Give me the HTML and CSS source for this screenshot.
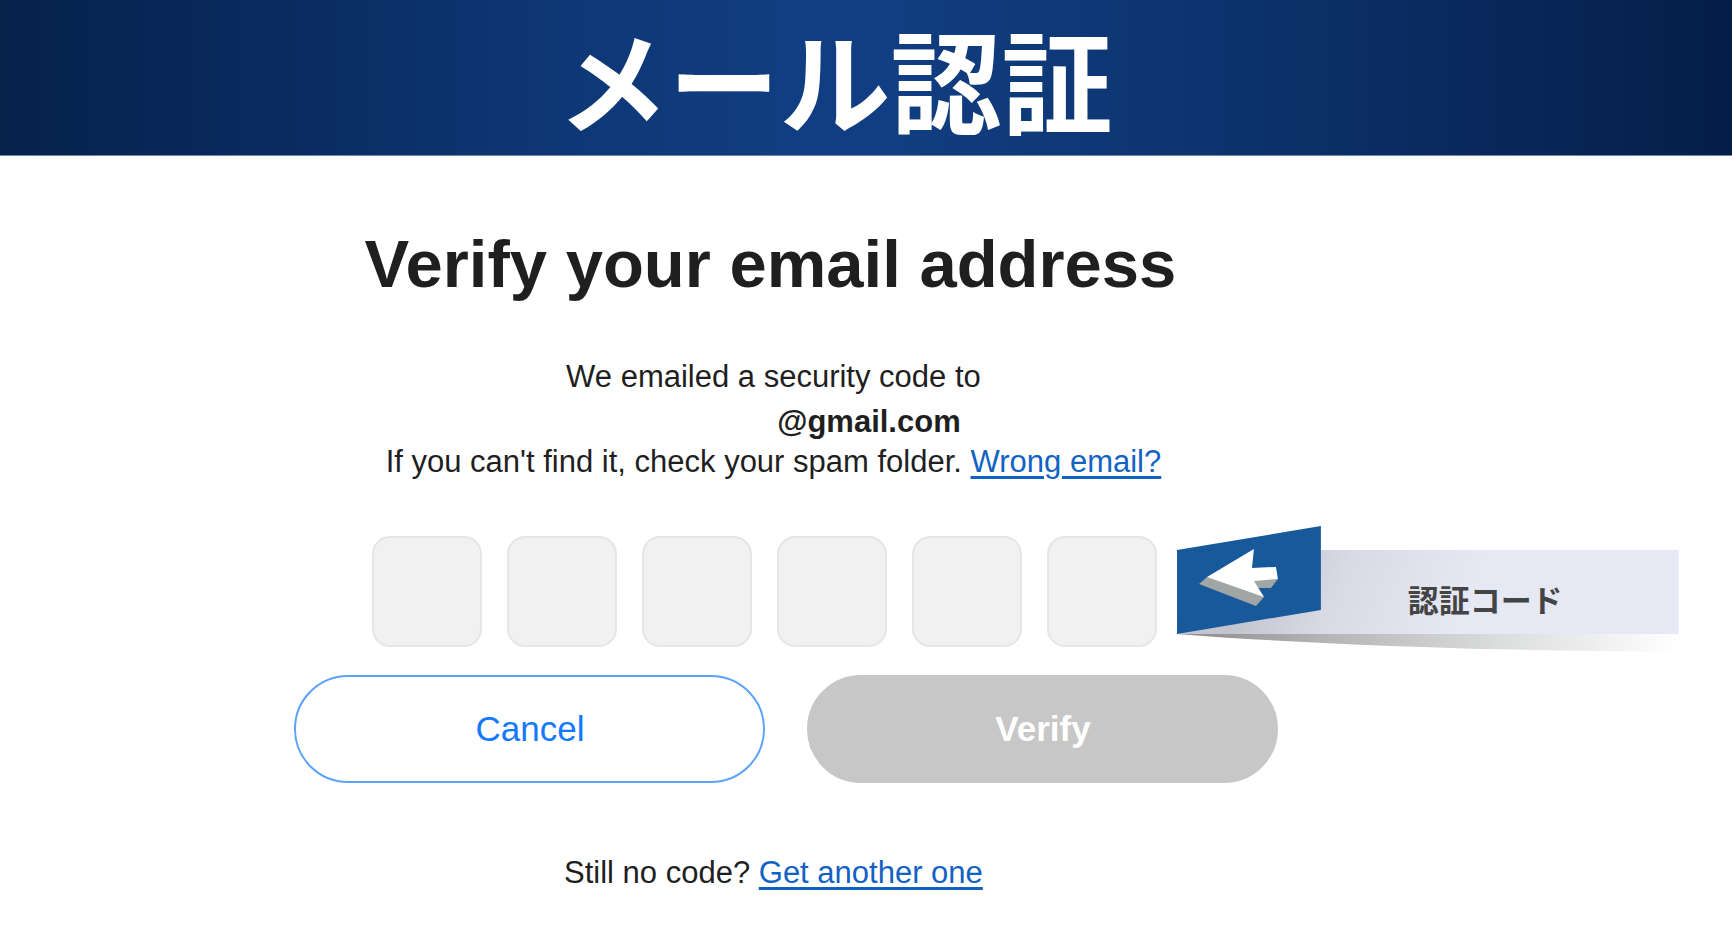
FILE: index.html
```html
<!DOCTYPE html>
<html lang="ja">
<head>
  <meta charset="UTF-8">
  <meta name="viewport" content="width=device-width, initial-scale=1">
  <title>メール認証</title>
  <link rel="stylesheet" href="styles.css">
</head>
<body>
  <header class="banner">
    <h1>メール認証</h1>
  </header>

  <main>
    <form id="verifyForm" lang="en">
      <div class="copy">
        <h2>Verify your email address</h2>
        <p>We emailed a security code to</p>
        <p class="address"><strong>@gmail.com</strong></p>
        <p>If you can't find it, check your spam folder. <a href="#">Wrong email?</a></p>
      </div>

      <div class="code-row">
        <!-- One box per digit -->
        <div class="digits">
          <input type="text" inputmode="numeric" maxlength="1" aria-label="Digit 1">
          <input type="text" inputmode="numeric" maxlength="1" aria-label="Digit 2">
          <input type="text" inputmode="numeric" maxlength="1" aria-label="Digit 3">
          <input type="text" inputmode="numeric" maxlength="1" aria-label="Digit 4">
          <input type="text" inputmode="numeric" maxlength="1" aria-label="Digit 5">
          <input type="text" inputmode="numeric" maxlength="1" aria-label="Digit 6">
        </div>

        <svg class="callout" viewBox="0 0 502 126" lang="ja">
          <defs>
            <linearGradient id="band" gradientUnits="userSpaceOnUse" x1="70" y1="70" x2="260" y2="150">
              <stop offset="0" stop-color="#c2c4cf"/>
              <stop offset="0.4" stop-color="#d9dae5"/>
              <stop offset="1" stop-color="#e6e8f4"/>
            </linearGradient>
            <linearGradient id="shadow">
              <stop offset="0" stop-color="#8c8a8a"/>
              <stop offset="0.3" stop-color="#b5b5b5"/>
              <stop offset="0.65" stop-color="#dcdddd"/>
              <stop offset="1" stop-color="#ffffff"/>
            </linearGradient>
          </defs>
          <path d="M0 108H502V126Q200 124 0 108Z" fill="url(#shadow)"/>
          <path d="M0 108L144 24H502V108Z" fill="url(#band)"/>
          <path d="M0 24L144 0V84L0 108Z" fill="#18599b"/>
          <path d="M30 51L22 58L79 80L87 71L81 62H94L101 53L77 50Z" fill="#a1a5a4"/>
          <path d="M30 51L77 23L75 42L99 41L101 53L77 55L87 71Z" fill="#ffffff"/>
          <text class="callout-text" x="231" y="86">認証コード</text>
        </svg>
      </div>

      <div class="buttons">
        <button type="button" class="cancel">Cancel</button>
        <button type="submit" class="verify" disabled>Verify</button>
      </div>

      <p class="resend">Still no code? <a href="#">Get another one</a></p>
    </form>
  </main>
</body>
</html>
```

FILE: styles.css
```css
body {
  margin: 0;
  background: #ffffff;
  color: #1f1f1f;
  font-family: "Liberation Sans", Arial, sans-serif;
  font-size: 31px;
  line-height: 40px;
}
.banner {
  padding-right: 62px;
  border-bottom: 1px solid #7186ad;
  text-align: center;
  background: linear-gradient(90deg, #05224b 0%, #0a2c62 18%, #0d3672 30%, #113e82 46%, #113e82 51%, #0d3672 66%, #0a2b60 82%, #041e48 100%);
}
.banner h1 {
  margin: 0;
  color: #ffffff;
  font-family: "Noto Sans CJK JP", sans-serif;
  font-size: 111px;
  font-weight: bold;
  line-height: 155px;
}
main {
  padding: 66px 53px 32px 17%;
}
.copy,
.resend {
  max-width: 958px;
  text-align: center;
}
h2 {
  margin: 0 0 51px;
  padding-right: 6px;
  font-size: 67px;
  line-height: 84px;
}
p {
  margin: 0;
}
.address {
  margin-top: 5px;
  padding-left: 191px;
}
a {
  color: #1262c4;
  text-decoration-thickness: 3px;
  text-underline-offset: 4px;
}
.code-row {
  display: flex;
  align-items: flex-start;
  gap: 20px;
  margin: 44px 0 23px 78px;
}
.digits {
  display: flex;
  gap: 25px;
  padding-top: 10px;
}
.digits input {
  width: 110px;
  height: 111px;
  box-sizing: border-box;
  padding: 0;
  border: 2px solid #e6e6e6;
  border-radius: 18px;
  background: #f1f1f1;
  font: inherit;
  text-align: center;
}
.callout {
  flex: 1;
  max-width: 502px;
}
.callout-text {
  fill: #444444;
  font-family: "Noto Sans CJK JP", sans-serif;
  font-size: 31px;
  font-weight: bold;
}
.buttons {
  display: flex;
  gap: 42px;
  max-width: 984px;
}
button {
  flex: 1;
  height: 108px;
  border: 2px solid #5aa2fc;
  border-radius: 54px;
  background: #ffffff;
  color: #1479ff;
  font-family: inherit;
  font-size: 35px;
}
.verify {
  border-color: #c7c7c7;
  background: #c7c7c7;
  color: #ffffff;
  font-weight: bold;
}
.resend {
  margin-top: 70px;
}
```
